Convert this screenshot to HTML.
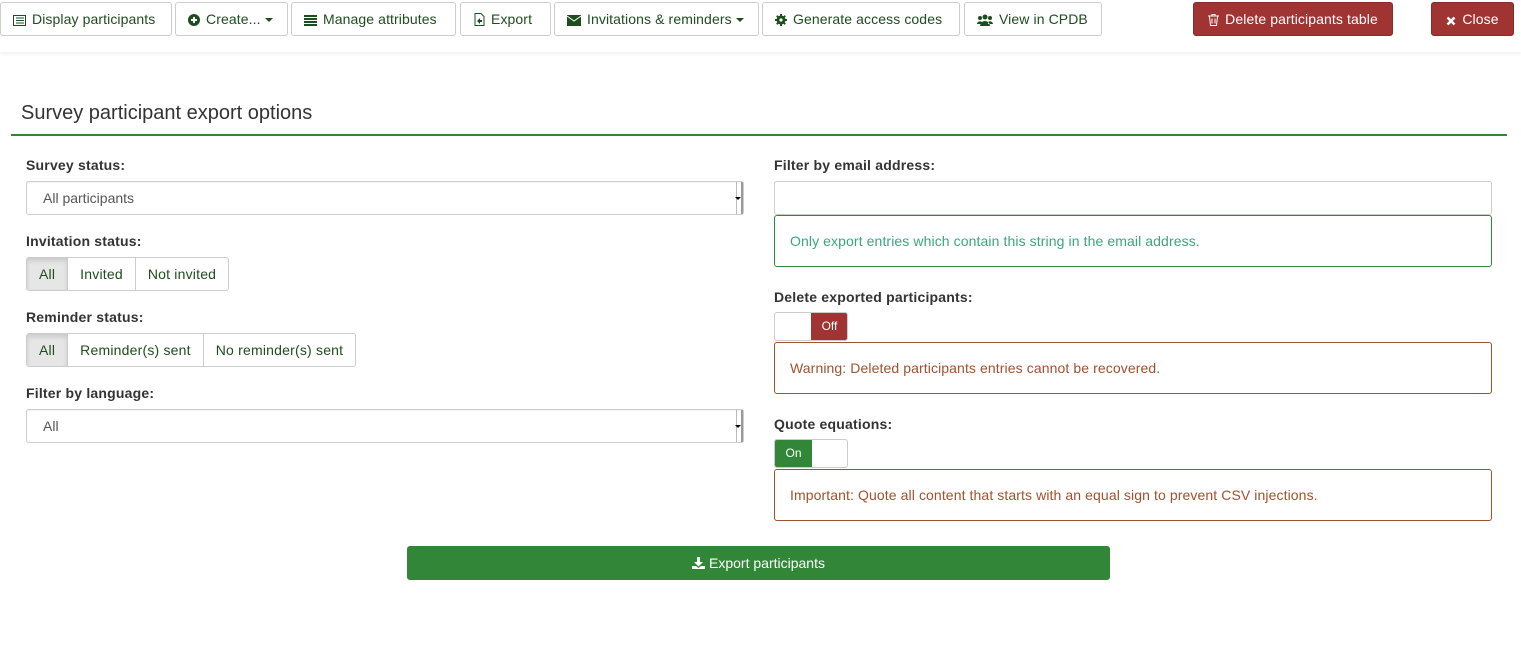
<!DOCTYPE html>
<html><head><meta charset="utf-8"><style>
*{box-sizing:border-box}
body{margin:0;width:1521px;height:670px;background:#fff;font-family:"Liberation Sans",sans-serif;font-size:14px;color:#333;position:relative;overflow:hidden}
.top{position:absolute;left:0;top:0;width:1521px;height:52px;box-shadow:0 2px 4px rgba(0,0,0,.06)}
.b{position:absolute;top:2px;height:34px;border:1px solid #ccc;border-radius:3px;background:#fff;color:#1e4d1e;line-height:32px;font-size:14px;white-space:nowrap;padding-left:12px;letter-spacing:.1px}
.b svg{vertical-align:-2px;margin-right:6px}
.r{background:#a03432;border-color:#8a2c2a;color:#fff;text-align:center;padding:0}
.caret{display:inline-block;border-left:4px solid transparent;border-right:4px solid transparent;border-top:4px solid #1e4d1e;vertical-align:middle;margin-left:4px}
h3{position:absolute;left:21px;top:102px;margin:0;font-weight:normal;font-size:20px;color:#333}
.hr{position:absolute;left:11px;top:134px;width:1496px;height:2px;background:#328637}
label{position:absolute;font-weight:bold;font-size:14px;color:#333;letter-spacing:.2px}
.sel{position:absolute;height:34px;border:1px solid #ccc;border-radius:3px;color:#555;line-height:32px;padding-left:16px;box-shadow:inset 0 1px 1px rgba(0,0,0,.05)}
.sel:after{content:"";position:absolute;right:0;top:0;width:4px;height:32px;border-left:1px solid #bbb;border-right:2px solid #999}
.sel i{position:absolute;right:2px;top:15px;border-left:3px solid transparent;border-right:3px solid transparent;border-top:3px solid #000;z-index:2}
.grp{position:absolute;height:34px;display:flex;border:1px solid #ccc;border-radius:3px;overflow:hidden}
.grp span{line-height:32px;padding:0 12px;color:#1e4d1e;border-left:1px solid #ccc;letter-spacing:.2px}
.grp span:first-child{border-left:0;background:#e6e6e6;box-shadow:inset 0 3px 5px rgba(0,0,0,.12)}
.box{position:absolute;left:774px;width:718px;height:52px;border:1px solid;border-radius:3px;line-height:50px;padding-left:15px;letter-spacing:.1px}
.tg{position:absolute;left:774px;width:74px;height:29px;border:1px solid #ccc;border-radius:3px;overflow:hidden;font-size:12px;color:#fff}
.tg span{position:absolute;top:0;width:37px;height:27px;line-height:27px;text-align:center}
.exp{position:absolute;left:407px;top:546px;width:703px;height:34px;background:#328637;border-radius:3px;color:#fff;text-align:center;line-height:34px}
</style></head><body>
<div class="top"></div>
<div class="b" style="left:0;width:172px"><svg width="13" height="11" viewBox="0 0 13 11"><rect x="0.5" y="0.5" width="12" height="10" fill="none" stroke="#1e4d1e"/><path d="M3 3h8M3 5.5h8M3 8h8" stroke="#1e4d1e"/></svg>Display participants</div>
<div class="b" style="left:175px;width:113px"><svg width="12" height="12" viewBox="0 0 12 12"><circle cx="6" cy="6" r="6" fill="#1e4d1e"/><path d="M6 3v6M3 6h6" stroke="#fff" stroke-width="2"/></svg>Create...<span class="caret"></span></div>
<div class="b" style="left:291px;width:165px"><svg width="13" height="11" viewBox="0 0 13 11"><path d="M0 1h13M0 4h13M0 7h13M0 10h13" stroke="#1e4d1e" stroke-width="2"/></svg>Manage attributes</div>
<div class="b" style="left:460px;width:91px;padding-left:13px"><svg width="11" height="13" viewBox="0 0 11 13"><path d="M1 .5h6l3 3v9H1z" fill="none" stroke="#1e4d1e"/><path d="M3 8l3-3v2h2v2H6v2z" fill="#1e4d1e"/></svg>Export</div>
<div class="b" style="left:554px;width:205px"><svg width="14" height="11" viewBox="0 0 14 11"><rect width="14" height="11" fill="#1e4d1e"/><path d="M0 1l7 5 7-5" stroke="#fff" fill="none"/></svg>Invitations &amp; reminders<span class="caret"></span></div>
<div class="b" style="left:762px;width:198px"><svg width="12" height="12" viewBox="0 0 12 12"><circle cx="6" cy="6" r="4.5" fill="#1e4d1e"/><path d="M6 0v12M0 6h12M1.8 1.8l8.4 8.4M10.2 1.8l-8.4 8.4" stroke="#1e4d1e" stroke-width="2"/><circle cx="6" cy="6" r="1.6" fill="#fff"/></svg>Generate access codes</div>
<div class="b" style="left:964px;width:138px"><svg width="16" height="12" viewBox="0 0 16 12"><circle cx="8" cy="3" r="2.5" fill="#1e4d1e"/><circle cx="3" cy="4" r="2" fill="#1e4d1e"/><circle cx="13" cy="4" r="2" fill="#1e4d1e"/><path d="M3 12a5 5 0 0 1 10 0zM0 10a3 3 0 0 1 5-2v2zM16 10a3 3 0 0 0-5-2v2z" fill="#1e4d1e"/></svg>View in CPDB</div>
<div class="b r" style="left:1193px;width:200px"><svg width="11" height="12" viewBox="0 0 11 12"><path d="M0 2h11M4 2V.5h3V2M1.5 2.5l1 9h6l1-9M4 4.5v5M7 4.5v5" stroke="#fff" fill="none"/></svg>Delete participants table</div>
<div class="b r" style="left:1431px;width:83px"><svg width="10" height="10" viewBox="0 0 10 10"><path d="M1.5 1.5l7 7M8.5 1.5l-7 7" stroke="#fff" stroke-width="2.5"/></svg>Close</div>

<h3>Survey participant export options</h3>
<div class="hr"></div>

<label style="left:26px;top:157px">Survey status:</label>
<div class="sel" style="left:26px;top:181px;width:718px">All participants<i></i></div>
<label style="left:26px;top:233px">Invitation status:</label>
<div class="grp" style="left:26px;top:257px"><span>All</span><span>Invited</span><span>Not invited</span></div>
<label style="left:26px;top:309px">Reminder status:</label>
<div class="grp" style="left:26px;top:333px"><span>All</span><span>Reminder(s) sent</span><span>No reminder(s) sent</span></div>
<label style="left:26px;top:385px">Filter by language:</label>
<div class="sel" style="left:26px;top:409px;width:718px">All<i></i></div>

<label style="left:774px;top:157px">Filter by email address:</label>
<div style="position:absolute;left:774px;top:181px;width:718px;height:34px;border:1px solid #ccc;border-radius:3px"></div>
<div class="box" style="top:215px;border-color:#328637;color:#3aa67d">Only export entries which contain this string in the email address.</div>
<label style="left:774px;top:289px">Delete exported participants:</label>
<div class="tg" style="top:312px"><span style="left:36px;background:#a03432">Off</span></div>
<div class="box" style="top:342px;border-color:#a0522d;color:#a0522d">Warning: Deleted participants entries cannot be recovered.</div>
<label style="left:774px;top:416px">Quote equations:</label>
<div class="tg" style="top:439px"><span style="left:0;background:#328637">On</span></div>
<div class="box" style="top:469px;border-color:#a0522d;color:#a0522d">Important: Quote all content that starts with an equal sign to prevent CSV injections.</div>

<div class="exp"><svg width="13" height="12" viewBox="0 0 13 12" style="vertical-align:-1px;margin-right:4px"><path d="M5 0h3v5h3l-4.5 4.5L2 5h3z" fill="#fff"/><path d="M0 9h4l2.5 2 2.5-2h4v3H0z" fill="#fff"/></svg>Export participants</div>
</body></html>
